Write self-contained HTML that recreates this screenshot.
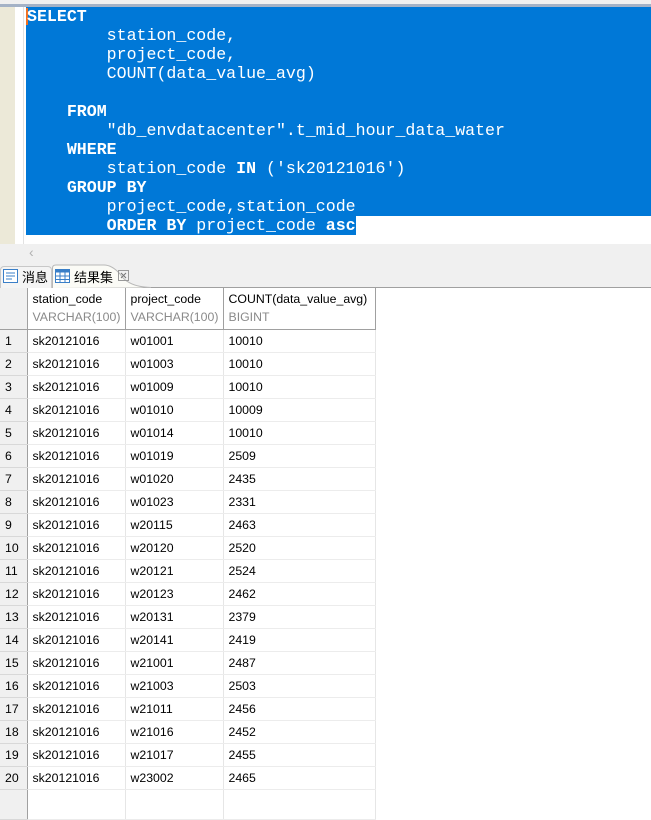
<!DOCTYPE html>
<html><head><meta charset="utf-8"><style>
*{margin:0;padding:0;box-sizing:border-box}
body{width:651px;height:808px;overflow:hidden;background:#fff;position:relative;font-family:"Liberation Sans","Noto Sans CJK SC",sans-serif}
.a{position:absolute}
.code{position:absolute;left:27px;top:7px;font-family:"Liberation Mono",monospace;font-size:16.6px;line-height:19px;color:#fff;white-space:pre}
.code b{font-weight:bold}
table{position:absolute;left:0;top:288px;border-collapse:collapse;table-layout:fixed;width:375px;font-size:12.3px;color:#000}
td{height:23px;border-right:1px solid #e6e6e6;border-bottom:1px solid #ececec;padding:0 0 0 5px;white-space:nowrap;overflow:hidden}
td.n{background:#f0f0f0;border-right:1px solid #a0a0a0;border-bottom:1px solid #d8d8d8;padding-left:5px}
tr.h td{height:41px;border-bottom:1px solid #a0a0a0;border-right:1px solid #a0a0a0;line-height:18px;vertical-align:middle}
tr.h td span{color:#8a8a8a}
</style></head><body>
<div class="a" style="left:0;top:0;width:651px;height:4px;background:#f0f0f0"></div>
<div class="a" style="left:0;top:4px;width:651px;height:3px;background:#a4b2c6"></div>
<div class="a" style="left:0;top:7px;width:15px;height:237px;background:#ece9d8"></div>
<div class="a" style="left:23px;top:7px;width:1px;height:237px;background:#e2e2e2"></div>
<div class="a" style="left:26px;top:7px;width:625px;height:209px;background:#0078d7"></div>
<div class="a" style="left:26px;top:216px;width:330px;height:19px;background:#0078d7"></div>
<div class="a" style="left:26px;top:8px;width:2px;height:17px;background:#f07020"></div>
<div class="code"><b>SELECT</b>
        station_code,
        project_code,
        COUNT(data_value_avg)

    <b>FROM</b>
        "db_envdatacenter".t_mid_hour_data_water
    <b>WHERE</b>
        station_code <b>IN</b> ('sk20121016')
    <b>GROUP BY</b>
        project_code,station_code
        <b>ORDER BY</b> project_code <b>asc</b></div>
<div class="a" style="left:0;top:244px;width:651px;height:44px;background:#f0f0f0"></div>
<div class="a" style="left:29px;top:244px;color:#b0b0b0;font-size:14px">‹</div>
<div class="a" style="left:0;top:287px;width:651px;height:1px;background:#a0a0a0"></div>
<div class="a" style="left:0;top:266px;width:52px;height:22px;border:1px solid #c8c8c8;border-bottom:none;border-radius:4px 4px 0 0;background:#f4f4f4"></div>
<svg class="a" style="left:3px;top:269px" width="15" height="14"><rect x="0.5" y="0.5" width="14" height="13" fill="#fff" stroke="#3a7fc8"/><path d="M3 4h9M3 7h9M3 10h6" stroke="#3a7fc8"/></svg>
<div class="a" style="left:22px;top:267px;font-size:13px">消息</div>
<svg class="a" style="left:52px;top:264px" width="100" height="24"><path d="M0.5 24V4Q0.5 1 4 1H52Q60 1 68 10Q76 23 99 23.5" fill="#fbfbf6" stroke="#b8b8b8"/></svg>
<svg class="a" style="left:55px;top:269px" width="15" height="14"><rect x="0.5" y="0.5" width="14" height="13" fill="#fff" stroke="#3a7fc8"/><rect x="0.5" y="0.5" width="14" height="3" fill="#3a7fc8"/><path d="M5 1v13M10 1v13M1 7h14M1 10.5h14" stroke="#3a7fc8"/></svg>
<div class="a" style="left:74px;top:267px;font-size:13px">结果集</div>
<svg class="a" style="left:118px;top:270px" width="11" height="11"><rect x="0.5" y="0.5" width="10" height="10" fill="none" stroke="#999"/><path d="M3 3l5 5M8 3l-5 5" stroke="#777"/></svg>
<table>
<colgroup><col style="width:27px"><col style="width:98px"><col style="width:98px"><col style="width:152px"></colgroup>
<tr class="h"><td class="n"></td><td>station_code<br><span>VARCHAR(100)</span></td><td>project_code<br><span>VARCHAR(100)</span></td><td>COUNT(data_value_avg)<br><span>BIGINT</span></td></tr>
<tr><td class="n">1</td><td>sk20121016</td><td>w01001</td><td>10010</td></tr>
<tr><td class="n">2</td><td>sk20121016</td><td>w01003</td><td>10010</td></tr>
<tr><td class="n">3</td><td>sk20121016</td><td>w01009</td><td>10010</td></tr>
<tr><td class="n">4</td><td>sk20121016</td><td>w01010</td><td>10009</td></tr>
<tr><td class="n">5</td><td>sk20121016</td><td>w01014</td><td>10010</td></tr>
<tr><td class="n">6</td><td>sk20121016</td><td>w01019</td><td>2509</td></tr>
<tr><td class="n">7</td><td>sk20121016</td><td>w01020</td><td>2435</td></tr>
<tr><td class="n">8</td><td>sk20121016</td><td>w01023</td><td>2331</td></tr>
<tr><td class="n">9</td><td>sk20121016</td><td>w20115</td><td>2463</td></tr>
<tr><td class="n">10</td><td>sk20121016</td><td>w20120</td><td>2520</td></tr>
<tr><td class="n">11</td><td>sk20121016</td><td>w20121</td><td>2524</td></tr>
<tr><td class="n">12</td><td>sk20121016</td><td>w20123</td><td>2462</td></tr>
<tr><td class="n">13</td><td>sk20121016</td><td>w20131</td><td>2379</td></tr>
<tr><td class="n">14</td><td>sk20121016</td><td>w20141</td><td>2419</td></tr>
<tr><td class="n">15</td><td>sk20121016</td><td>w21001</td><td>2487</td></tr>
<tr><td class="n">16</td><td>sk20121016</td><td>w21003</td><td>2503</td></tr>
<tr><td class="n">17</td><td>sk20121016</td><td>w21011</td><td>2456</td></tr>
<tr><td class="n">18</td><td>sk20121016</td><td>w21016</td><td>2452</td></tr>
<tr><td class="n">19</td><td>sk20121016</td><td>w21017</td><td>2455</td></tr>
<tr><td class="n">20</td><td>sk20121016</td><td>w23002</td><td>2465</td></tr>
<tr><td class="n" style="height:30px"></td><td></td><td></td><td></td></tr>
</table>
</body></html>
